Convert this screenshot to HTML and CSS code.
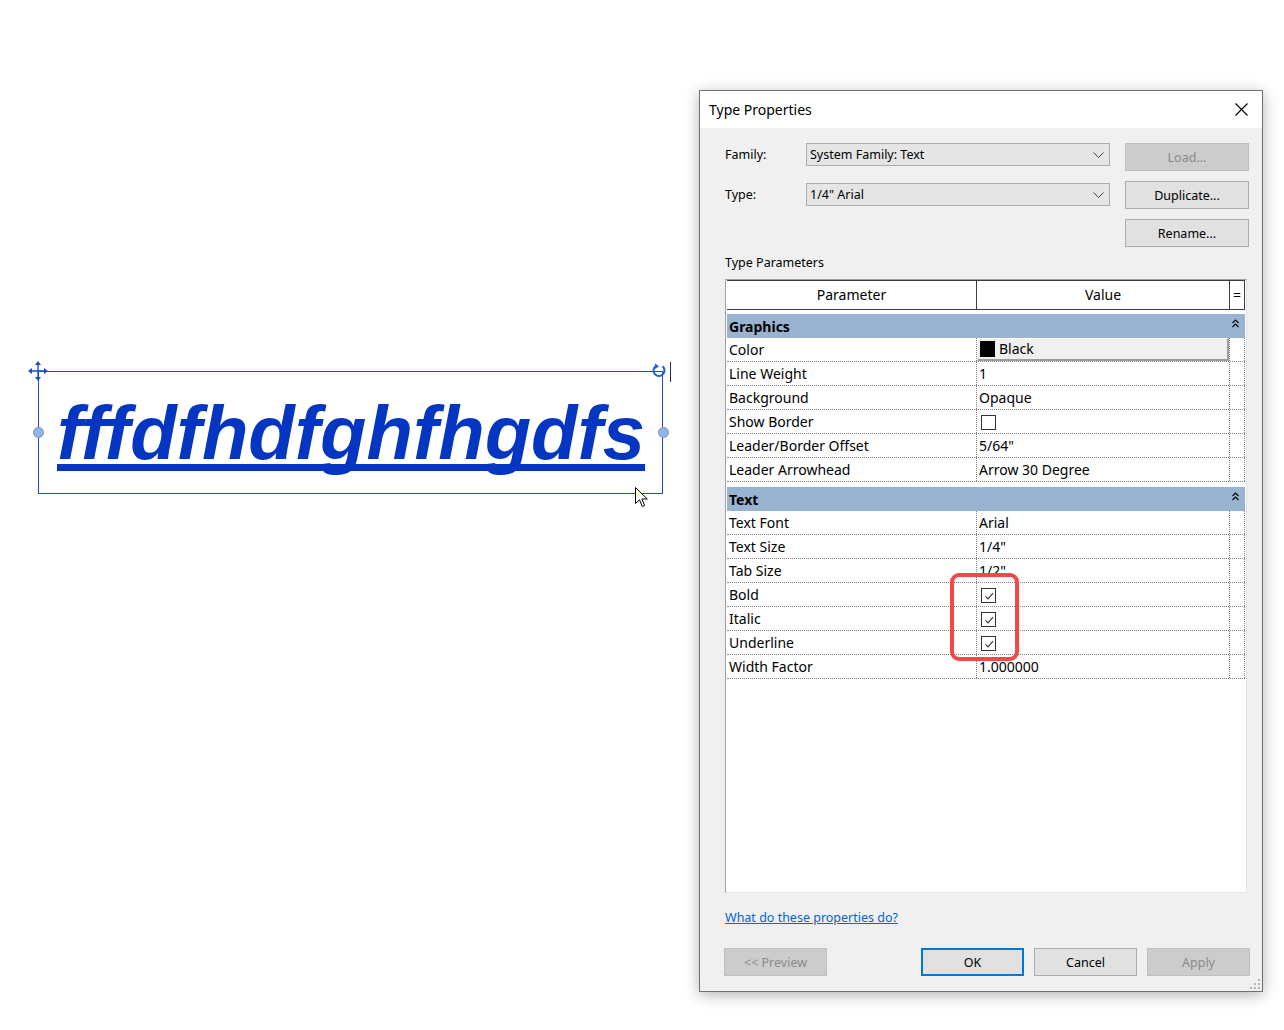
FILE: index.html
```html
<!DOCTYPE html>
<html lang="en">
<head>
    <meta charset="UTF-8">
    <meta name="viewport" content="width=device-width, initial-scale=1.0">
    <title>Type Properties</title>
    <link rel="stylesheet" href="styles.css">
</head>
<body>
    <div class="desk">
        <!-- selected text note on the canvas -->
        <div class="note">
            <span class="note-text">fffdfhdfghfhgdfs</span>
            <svg class="move-grip" width="22" height="22" viewBox="0 0 22 22">
                <path d="M11 3V19M3 11H19" stroke="#1d4ec4" stroke-width="1.4" fill="none"/>
                <path d="M11 1L8 5H14Z M11 21L8 17H14Z M1 11L5 8V14Z M21 11L17 8V14Z" fill="#1d4ec4"/>
            </svg>
            <svg class="rotate-grip" width="16" height="16" viewBox="0 0 16 16">
                <path d="M11.5 3.2A5.5 5.5 0 1 1 5 2.8" stroke="#1f5fe0" stroke-width="2" fill="none"/>
                <path d="M4 0.5L8 3.2L4 6Z" fill="#1f5fe0"/>
            </svg>
            <span class="caret-line"></span>
            <span class="grip grip-left"></span>
            <span class="grip grip-right"></span>
            <svg class="cursor" width="14" height="21" viewBox="0 0 14 21">
                <path d="M0.5 0.5V16.5L4.5 12.8L7.3 19.5L9.6 18.5L6.9 12H12.3Z" fill="#fff" stroke="#000" stroke-width="1"/>
            </svg>
        </div>

        <div class="dialog">
            <div class="title-bar">
                <span>Type Properties</span>
                <svg width="13" height="13" viewBox="0 0 13 13">
                    <path d="M0.5 0.5L12.5 12.5M12.5 0.5L0.5 12.5" stroke="#000" stroke-width="1.1"/>
                </svg>
            </div>
            <div class="dialog-body">
                <div class="type-form">
                    <label class="field-label">Family:</label>
                    <div class="combo">
                        <span>System Family: Text</span>
                        <svg width="11" height="6" viewBox="0 0 11 6"><path d="M0.5 0.5L5.5 5.5L10.5 0.5" stroke="#444" fill="none"/></svg>
                    </div>
                    <button class="btn" disabled>Load...</button>

                    <label class="field-label field-low">Type:</label>
                    <div class="combo combo-low">
                        <span>1/4" Arial</span>
                        <svg width="11" height="6" viewBox="0 0 11 6"><path d="M0.5 0.5L5.5 5.5L10.5 0.5" stroke="#444" fill="none"/></svg>
                    </div>
                    <button class="btn">Duplicate...</button>

                    <span></span>
                    <span></span>
                    <button class="btn">Rename...</button>
                </div>

                <div class="section-label">Type Parameters</div>

                <div class="prop-grid">
                    <div class="grid-head">
                        <div class="cell">Parameter</div>
                        <div class="cell">Value</div>
                        <div class="cell">=</div>
                    </div>

                    <div class="group group-first">
                        <span>Graphics</span>
                        <svg width="7" height="9" viewBox="0 0 7 9"><path d="M0.5 4L3.5 1L6.5 4M0.5 8L3.5 5L6.5 8" stroke="#000" stroke-width="1.1" fill="none"/></svg>
                    </div>
                    <div class="row">
                        <div class="cell">Color</div>
                        <div class="cell value"><span class="color-btn"><i class="swatch"></i>Black</span></div>
                        <div class="cell"></div>
                    </div>
                    <div class="row">
                        <div class="cell">Line Weight</div>
                        <div class="cell">1</div>
                        <div class="cell"></div>
                    </div>
                    <div class="row">
                        <div class="cell">Background</div>
                        <div class="cell">Opaque</div>
                        <div class="cell"></div>
                    </div>
                    <div class="row">
                        <div class="cell">Show Border</div>
                        <div class="cell value"><span class="check"></span></div>
                        <div class="cell"></div>
                    </div>
                    <div class="row">
                        <div class="cell">Leader/Border Offset</div>
                        <div class="cell">5/64"</div>
                        <div class="cell"></div>
                    </div>
                    <div class="row">
                        <div class="cell">Leader Arrowhead</div>
                        <div class="cell">Arrow 30 Degree</div>
                        <div class="cell"></div>
                    </div>

                    <div class="group">
                        <span>Text</span>
                        <svg width="7" height="9" viewBox="0 0 7 9"><path d="M0.5 4L3.5 1L6.5 4M0.5 8L3.5 5L6.5 8" stroke="#000" stroke-width="1.1" fill="none"/></svg>
                    </div>
                    <div class="row">
                        <div class="cell">Text Font</div>
                        <div class="cell">Arial</div>
                        <div class="cell"></div>
                    </div>
                    <div class="row">
                        <div class="cell">Text Size</div>
                        <div class="cell">1/4"</div>
                        <div class="cell"></div>
                    </div>
                    <div class="row">
                        <div class="cell">Tab Size</div>
                        <div class="cell">1/2"</div>
                        <div class="cell"></div>
                    </div>
                    <div class="row">
                        <div class="cell">Bold</div>
                        <div class="cell value"><span class="check checked"><svg width="12" height="12" viewBox="0 0 12 12"><path d="M2.5 6.3L5 8.8L10 3.2" stroke="#3a3a3a" stroke-width="1.2" fill="none"/></svg></span></div>
                        <div class="cell"></div>
                    </div>
                    <div class="row">
                        <div class="cell">Italic</div>
                        <div class="cell value"><span class="check checked"><svg width="12" height="12" viewBox="0 0 12 12"><path d="M2.5 6.3L5 8.8L10 3.2" stroke="#3a3a3a" stroke-width="1.2" fill="none"/></svg></span></div>
                        <div class="cell"></div>
                    </div>
                    <div class="row">
                        <div class="cell">Underline</div>
                        <div class="cell value"><span class="check checked"><svg width="12" height="12" viewBox="0 0 12 12"><path d="M2.5 6.3L5 8.8L10 3.2" stroke="#3a3a3a" stroke-width="1.2" fill="none"/></svg></span></div>
                        <div class="cell"></div>
                    </div>
                    <div class="row">
                        <div class="cell">Width Factor</div>
                        <div class="cell">1.000000</div>
                        <div class="cell"></div>
                    </div>

                    <div class="highlight"></div>
                </div>

                <a class="help-link" href="#">What do these properties do?</a>

                <div class="footer">
                    <button class="btn btn-wide preview" disabled>&lt;&lt; Preview</button>
                    <button class="btn btn-wide btn-default">OK</button>
                    <button class="btn btn-wide">Cancel</button>
                    <button class="btn btn-wide" disabled>Apply</button>
                </div>
            </div>
            <svg class="resize-grip" width="10" height="10" viewBox="0 0 10 10">
                <rect x="8" y="0" width="2" height="2" fill="#b5b5b5"/>
                <rect x="4" y="4" width="2" height="2" fill="#b5b5b5"/>
                <rect x="8" y="4" width="2" height="2" fill="#b5b5b5"/>
                <rect x="0" y="8" width="2" height="2" fill="#b5b5b5"/>
                <rect x="4" y="8" width="2" height="2" fill="#b5b5b5"/>
                <rect x="8" y="8" width="2" height="2" fill="#b5b5b5"/>
            </svg>
        </div>
    </div>
</body>
</html>
```

FILE: styles.css
```css
* {
    box-sizing: border-box;
}
body {
    margin: 0;
    background: #ffffff;
    font-family: "Noto Sans", "Open Sans", sans-serif;
}
.desk {
    position: relative;
    width: 1284px;
    height: 1030px;
    overflow: hidden;
}

/* canvas note */
.note {
    position: absolute;
    left: 38px;
    top: 371px;
    width: 625px;
    height: 123px;
    border: 1px solid #1d4ec4;
    padding: 23px 0 0 18px;
}
.note-text {
    font-family: "Liberation Sans", Arial, sans-serif;
    font-weight: bold;
    font-style: italic;
    font-size: 76px;
    line-height: 76px;
    color: #0536c2;
    white-space: nowrap;
    text-decoration: underline;
    text-decoration-thickness: 7px;
    text-underline-offset: 5px;
    text-decoration-skip-ink: none;
}
.move-grip {
    position: absolute;
    left: -12px;
    top: -12px;
}
.rotate-grip {
    position: absolute;
    right: -5px;
    top: -9px;
}
.caret-line {
    position: absolute;
    left: 631px;
    top: -10px;
    width: 1px;
    height: 20px;
    background: #203060;
}
.grip {
    position: absolute;
    top: 55px;
    width: 11px;
    height: 11px;
    border-radius: 50%;
    background: #8fb5f0;
    border: 1px solid #8a8f99;
}
.grip-left {
    left: -6px;
}
.grip-right {
    right: -7px;
}
.cursor {
    position: absolute;
    left: 596px;
    top: 115px;
}

/* dialog window */
.dialog {
    position: absolute;
    left: 699px;
    top: 90px;
    width: 564px;
    height: 902px;
    border: 1px solid #707070;
    background: #f0f0f0;
    box-shadow: 0 3px 14px rgba(0, 0, 0, 0.3);
    display: flex;
    flex-direction: column;
    font-size: 12.5px;
    color: #000000;
}
.title-bar {
    height: 37px;
    flex: none;
    background: #ffffff;
    display: flex;
    align-items: center;
    justify-content: space-between;
    padding: 0 14px 0 9px;
    font-size: 14px;
}
.dialog-body {
    flex: 1;
    display: flex;
    flex-direction: column;
    padding: 15px 12px 15px 25px;
}
.type-form {
    display: grid;
    grid-template-columns: 66px 304px 124px;
    grid-auto-rows: 28px;
    column-gap: 15px;
    row-gap: 10px;
}
.field-label {
    line-height: 23px;
}
.field-low,
.combo-low {
    margin-top: 2px;
}
.combo {
    height: 23px;
    border: 1px solid #adadad;
    background: #e5e5e5;
    display: flex;
    align-items: center;
    justify-content: space-between;
    padding: 0 5px 0 3px;
}
.btn {
    height: 28px;
    border: 1px solid #adadad;
    background: #e1e1e1;
    font-family: inherit;
    font-size: 12.5px;
    color: #000000;
    padding: 0;
}
.btn:disabled {
    background: #cccccc;
    border-color: #bfbfbf;
    color: #8a8a8a;
}
.section-label {
    margin: 8px 0;
    line-height: 16px;
}

/* property grid */
.prop-grid {
    position: relative;
    height: 614px;
    flex: none;
    margin-right: 3px;
    background: #ffffff;
    border: 1px solid #a0a0a0;
    border-right-color: #e3e3e3;
    border-bottom-color: #e3e3e3;
    padding: 0 1px;
    font-size: 14px;
}
.grid-head,
.row {
    display: grid;
    grid-template-columns: 250px 253px 15px;
}
.grid-head {
    height: 30px;
    border-top: 1px solid #3c3c3c;
    border-bottom: 1px solid #3c3c3c;
}
.grid-head .cell {
    border-right: 1px solid #3c3c3c;
    text-align: center;
    line-height: 28px;
}
.group {
    height: 24px;
    margin-top: 5px;
    background: #99b4d1;
    display: flex;
    align-items: flex-start;
    justify-content: space-between;
    padding: 0 6px 0 2px;
    font-weight: bold;
    line-height: 25px;
}
.group-first {
    margin-top: 4px;
}
.group svg {
    margin-top: 5px;
}
.row {
    height: 24px;
    border-bottom: 1px dotted #7f7f7f;
}
.row .cell {
    border-right: 1px dotted #7f7f7f;
    padding-left: 2px;
    line-height: 24px;
    white-space: nowrap;
    overflow: hidden;
}
.row .value {
    padding-left: 0;
}
.color-btn {
    display: flex;
    align-items: center;
    height: 23px;
    background: #f0f0f0;
    border-top: 1px solid #ffffff;
    border-left: 1px solid #ffffff;
    border-right: 2px solid #9c9c9c;
    border-bottom: 2px solid #9c9c9c;
    padding-left: 2px;
}
.swatch {
    width: 15px;
    height: 16px;
    background: #000000;
    margin-right: 4px;
}
.check {
    display: block;
    width: 15px;
    height: 15px;
    margin: 5px 0 0 4px;
    border: 1px solid #333333;
    background: #ffffff;
}
.check svg {
    display: block;
    margin: 1px 0 0 1px;
}
.highlight {
    position: absolute;
    left: 224px;
    top: 293px;
    width: 69px;
    height: 88px;
    border: 4px solid #f24848;
    border-radius: 9px;
}

/* footer */
.help-link {
    align-self: flex-start;
    margin-top: 17px;
    line-height: 16px;
    color: #0066cc;
    text-decoration: underline;
}
.footer {
    margin-top: auto;
    display: flex;
    gap: 10px;
}
.btn-wide {
    width: 103px;
}
.preview {
    margin-left: -1px;
    margin-right: auto;
}
.btn-default {
    border: 2px solid #0078d7;
}
.resize-grip {
    position: absolute;
    right: 2px;
    bottom: 2px;
}
```
